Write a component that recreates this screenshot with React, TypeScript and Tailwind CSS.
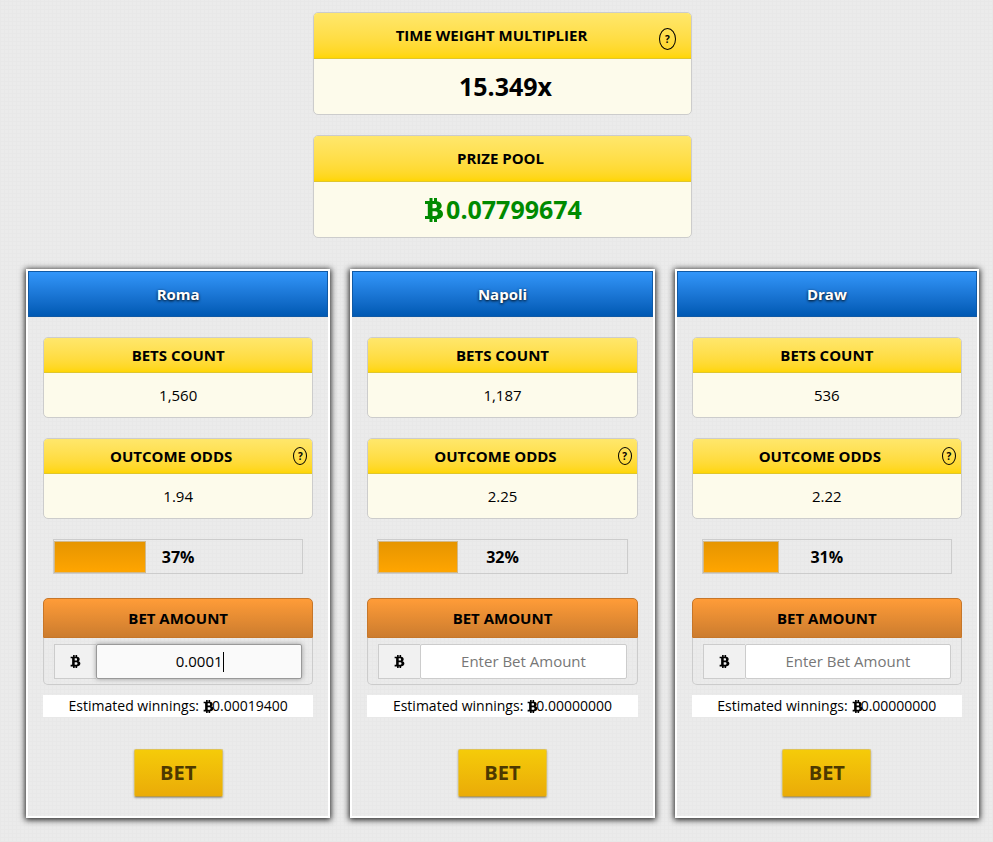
import { useState } from "react";

const outcomes = [
  { name: "Roma", bets: "1,560", odds: 1.94, percent: 37, share: 37, amount: "0.0001" },
  { name: "Napoli", bets: "1,187", odds: 2.25, percent: 32, share: 32, amount: "" },
  { name: "Draw", bets: "536", odds: 2.22, percent: 31, share: 30.6, amount: "" },
];

function BitcoinIcon({ className }: { className: string }) {
  return (
    <svg viewBox="0 0 18 24" className={className} fill="currentColor" aria-hidden="true">
      <path
        fillRule="evenodd"
        d="M0 3h4.500V0h3v3h1.500V0h3v3.200c3 .5 4.700 2.100 4.700 4.600 0 1.800-.9 3-2.400 3.700 2.200.6 3.700 2.100 3.700 4.400 0 3-2.300 4.800-6 5.100v3H9v-3H7.500v3h-3v-3H0v-3h2.800V6H0zM7.500 6v4.300h2c1.700 0 2.400-.7 2.400-2.200S11.200 6 9.500 6zM7.500 13.200V18h2.300c2 0 2.900-.8 2.900-2.400s-.9-2.400-2.900-2.400z"
      />
    </svg>
  );
}

function HelpButton({ small = false }: { small?: boolean }) {
  return (
    <button
      type="button"
      aria-label="Help"
      className={
        small
          ? "absolute right-[5px] top-2 h-[18px] w-[14px] rounded-[50%] border border-black text-[10px] leading-4 font-bold"
          : "absolute right-[15px] top-[15px] h-[22px] w-[17px] rounded-[50%] border border-black text-[10px] leading-5 font-bold"
      }
    >
      ?
    </button>
  );
}

function Summary({ title, help, children }: any) {
  return (
    <section className="rounded-[5px] border border-[#cccccc] bg-[#fdfbeb] text-center">
      <h2 className={`relative h-[46px] rounded-t-[4px] border-b border-[#e0c62c] bg-linear-to-b from-[#ffe76b] to-[#ffd600] text-[15px] leading-[45px] font-bold ${help ? "pr-[22px]" : "pr-1"}`}>
        {title}
        {help && <HelpButton />}
      </h2>
      <div className={`flex h-[55px] items-center justify-center text-[25px] font-bold ${help ? "pl-[6px]" : "pl-[2px]"}`}>{children}</div>
    </section>
  );
}

function Stat({ title, value, help }: any) {
  return (
    <section className="mb-5 rounded-[5px] border border-[#cccccc] bg-[#fdfbeb] text-center text-[15px]">
      <h3 className={`relative h-[35px] rounded-t-[4px] border-b border-[#e0c62c] bg-linear-to-b from-[#ffe76b] to-[#ffd600] leading-[34px] font-bold ${help ? "pr-[14px]" : ""}`}>
        {title}
        {help && <HelpButton small />}
      </h3>
      <p className="h-11 leading-[44px]">{value}</p>
    </section>
  );
}

function OutcomeCard({ outcome }: { outcome: (typeof outcomes)[number] }) {
  const [amount, setAmount] = useState(outcome.amount);
  const id = "bet-" + outcome.name;
  const winnings = (Number(amount) || 0) * outcome.odds;

  return (
    <article className="border-2 border-white pb-[19px] shadow-[0_1px_6px_1px_#222]">
      <h2 className="h-[46px] border border-[#0f59a5] bg-linear-to-b from-[#3296fa] to-[#0059b3] text-center text-[15px] leading-[44px] font-bold text-white [text-shadow:0_1px_3px_#000]">
        {outcome.name}
      </h2>
      <div className="px-[15px] pt-5">
        <Stat title="BETS COUNT" value={outcome.bets} />
        <Stat title="OUTCOME ODDS" value={outcome.odds} help />

        <div className="relative mx-[10px] mb-6 h-[35px] border border-[#cccccc] pt-px">
          <div
            className="h-full border border-[#d2b98a] bg-linear-to-b from-[#e69500] to-[#ffa500]"
            style={{ width: outcome.share + "%" }}
          />
          <span className="absolute inset-0 text-center text-base leading-[34px] font-bold">{outcome.percent}%</span>
        </div>

        <label
          htmlFor={id}
          className="block h-10 rounded-t-[5px] border border-[#c67629] bg-linear-to-b from-[#ff9c38] to-[#cc7c2e] text-center text-[15px] leading-[38px] font-bold"
        >
          BET AMOUNT
        </label>
        <div className="flex h-[47px] rounded-b-[5px] border border-t-0 border-[#cccccc] px-[10px] pt-[6px] pb-[5px]">
          <span className="flex w-[42px] shrink-0 items-center justify-center border border-r-0 border-[#cccccc] bg-[#f1f1f1]">
            <BitcoinIcon className="h-[13px] w-[11px]" />
          </span>
          <div className="relative flex min-w-0 flex-1">
            <input
              id={id}
              value={amount}
              onChange={(e) => setAmount(e.target.value)}
              placeholder="Enter Bet Amount"
              autoFocus={outcome.amount !== ""}
              className="peer w-full rounded-[2px] border border-[#cccccc] bg-white text-center text-[15px] caret-transparent outline-none placeholder:text-[#777777] focus:border-[#999999] focus:bg-[#fafafa] focus:shadow-[0_0_5px_#999]"
            />
            {/* caret at the end of the amount */}
            <span
              className="pointer-events-none absolute top-2 hidden h-5 w-px bg-black peer-focus:block"
              style={{ left: `calc(50% + ${amount.length * 4}px)` }}
            />
          </div>
        </div>

        <p className="mt-[10px] flex h-[22px] items-center justify-center bg-white text-sm">
          Estimated winnings:
          <BitcoinIcon className="ml-1 h-[13px] w-[11px]" />
          <span className="-ml-[2px]">{winnings.toFixed(8)}</span>
        </p>

        <div className="mt-8 flex justify-center">
          <button
            type="button"
            className="h-12 w-[89px] rounded-[2px] border border-[#dfc255] border-b-[#b99a45] bg-linear-to-b from-[#f5cb09] to-[#eaab08] text-xl leading-[46px] font-bold text-[#4d3900] shadow-[0_1px_2px_#999]"
          >
            BET
          </button>
        </div>
      </div>
    </article>
  );
}

export default function App() {
  return (
    <main className="min-h-screen bg-[#ebebeb] bg-[repeating-linear-gradient(0deg,#e8e8e8_0px_1px,transparent_1px_4px),repeating-linear-gradient(90deg,#e8e8e8_0px_1px,transparent_1px_4px)] pt-3 pr-[14px] pb-5 pl-[26px] font-['Open_Sans',sans-serif] text-black">
      <div className="mx-auto flex w-[379px] max-w-full flex-col gap-5">
        <Summary title="TIME WEIGHT MULTIPLIER" help>15.349x</Summary>
        <Summary title="PRIZE POOL">
          <span className="flex items-center text-[#008a00]">
            <BitcoinIcon className="mr-[3px] h-6 w-[18px]" />
            0.07799674
          </span>
        </Summary>
      </div>

      <div className="mt-[31px] grid grid-cols-3 gap-5">
        {outcomes.map((outcome) => (
          <OutcomeCard key={outcome.name} outcome={outcome} />
        ))}
      </div>
    </main>
  );
}
